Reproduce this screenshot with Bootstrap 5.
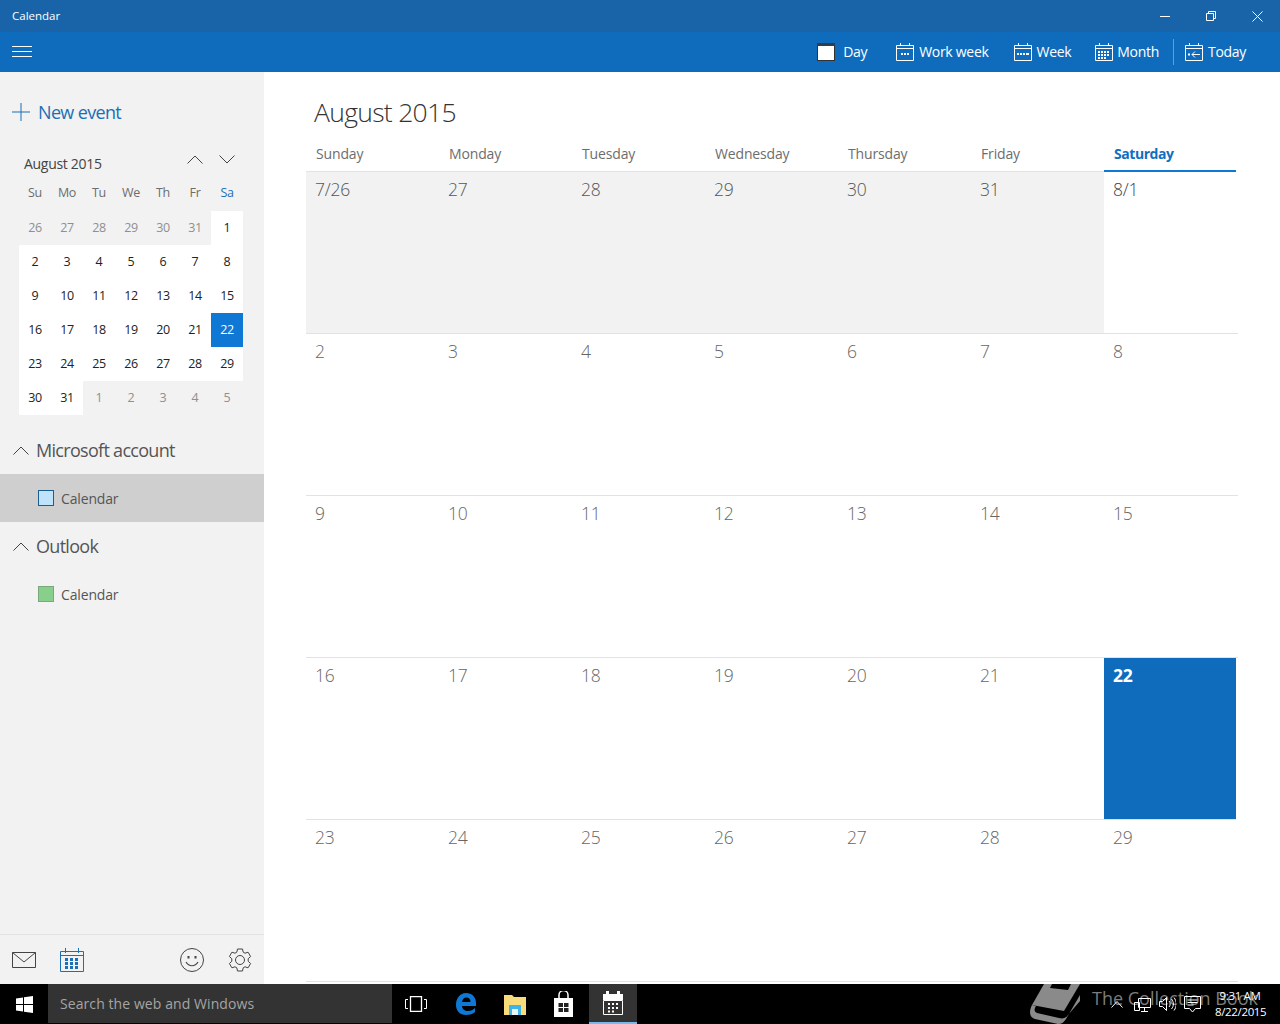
<!DOCTYPE html>
<html lang="en">
<head>
<meta charset="utf-8">
<title>Calendar</title>
<link href="https://cdn.jsdelivr.net/npm/bootstrap@5.3.0/dist/css/bootstrap.min.css" rel="stylesheet">
<style>
html,body{height:1024px;overflow:hidden;}
body{font-family:"Open Sans","Noto Sans",sans-serif;color:#444;background:#fff;}
.app-shell{width:1280px;height:1024px;display:flex;flex-direction:column;}
.title-strip{height:32px;background:#1964a8;color:#fff;font-size:11.5px;padding-left:12px;flex:none;}
.win-btns{width:138px;margin-left:auto;}
.win-btns span{width:46px;display:flex;justify-content:center;}
.tool-strip{height:40px;background:#0f6cbd;color:#fff;font-size:14px;flex:none;padding-right:34px;padding-bottom:1px;}
.ham{margin-left:12px;margin-right:auto;display:block;}
.tool-item{display:flex;align-items:center;gap:5px;margin-left:23px;letter-spacing:-.3px;}
.tool-item.first-item{gap:8px;}
.tool-item.wk-item{margin-left:29px;}
.tool-item.wkk-item{margin-left:25px;}
.tool-item.mon-item{margin-left:24px;gap:4px;}
.tool-sep{width:1px;height:26px;background:#5d9fd6;margin-left:14px;margin-right:-12px;}
.body-area{flex:1;display:flex;min-height:0;}
.side-col{width:264px;background:#f2f2f2;display:flex;flex-direction:column;flex:none;}
.new-evt{height:28px;margin-top:26px;padding-left:12px;color:#1a6fb5;font-size:18px;gap:8px;letter-spacing:-.65px;}
.mini-head{margin-top:24px;height:26px;padding-left:24px;position:relative;font-size:14px;color:#444;letter-spacing:-.3px;}
.mini-arrows{margin-left:auto;width:80px;padding-left:3px;display:flex;gap:16px;margin-top:-7px;padding-right:0;}
.mini-grid{display:grid;grid-template-columns:repeat(7,32px);grid-auto-rows:34px;margin-left:19px;font-size:12.5px;text-align:center;}
.mini-dow{height:36px;display:grid;grid-template-columns:repeat(7,32px);margin-left:19px;margin-top:-1px;font-size:12.5px;color:#6d6d6d;text-align:center;align-items:center;letter-spacing:-.3px;}
.mini-dow .sat-lbl{color:#1a6fb5;}
.mini-grid div{display:flex;align-items:center;justify-content:center;background:#fff;color:#222;letter-spacing:-.3px;}
.mini-grid div.off{background:transparent;color:#8f8f8f;}
.mini-grid div.now{background:#0f78d4;color:#fff;}
.acct-head{height:48px;font-size:18px;color:#555;letter-spacing:-.7px;padding-left:13px;gap:7px;}
.acct-first{margin-top:11px;}
.cal-row{height:48px;padding-left:38px;gap:7px;font-size:14px;color:#555;letter-spacing:-.15px;}
.cal-row.picked{background:#cfcfcf;}
.swatch{width:16px;height:16px;display:block;flex:none;}
.sw-blue{background:#bfe3fa;border:1px solid #1b5e94;}
.sw-green{background:#88cf8c;border:1px solid #7aa87c;}
.side-foot{margin-top:auto;height:50px;border-top:1px solid #e2e2e2;position:relative;padding:0 12px;}
.main-col{flex:1;padding:0 42px 0 42px;min-width:0;}
.main-title{font-size:26.5px;font-weight:300;color:#333;height:68px;margin:0;padding:21px 0 0 8px;line-height:38px;letter-spacing:-.7px;}
.week-head{display:grid;grid-template-columns:repeat(6,133px) 134px;height:32px;font-size:14px;color:#6d6d6d;letter-spacing:-.15px;}
.week-head div{padding:4px 0 0 10px;line-height:20px;border-bottom:1px solid #e2e2e2;}
.week-head div.sat-col{color:#0f6fc0;font-weight:700;border-bottom:2px solid #0f78d4;margin-right:2px;letter-spacing:-.45px;}
.month-grid{display:grid;grid-template-columns:repeat(6,133px) 134px;grid-auto-rows:162px;}
.month-grid div{padding:5px 0 0 9px;font-size:17.5px;line-height:24px;font-weight:300;color:#666;border-bottom:1px solid #e2e2e2;letter-spacing:-.2px;}
.month-grid div.prev{background:#f2f2f2;color:#555;}
.month-grid div.sat-first{color:#444;}
.month-grid div.today{background:#0f6cbd;background-clip:padding-box;color:#fff;font-weight:700;margin-right:2px;}
.task-strip{height:40px;background:#000;flex:none;position:relative;color:#fff;}
.start-btn{width:48px;display:flex;justify-content:center;}
.search-box{width:344px;height:39px;background:#333;color:#a5a5a5;font-size:14px;padding-left:12px;align-self:flex-start;letter-spacing:.08px;}
.tb-slot{width:48px;height:40px;display:flex;align-items:center;justify-content:center;}
.tb-slot.live{background:#333;border-bottom:2px solid #76b9ed;}
.slot-two{margin-left:2px;}
.slot-one{margin-left:1px;}
.tray{margin-left:auto;padding-right:15px;}
.net-ico{margin-left:11px;}
.clock{width:50px;text-align:center;font-size:11.5px;line-height:16px;margin-left:14px;letter-spacing:-.35px;white-space:nowrap;}
.wm-mark{position:absolute;left:1030px;top:0;height:40px;display:flex;align-items:flex-start;color:#7c7c7c;font-size:18px;gap:12px;white-space:nowrap;}
.wm-mark span{line-height:28px;}
.tray-layer{position:relative;z-index:1;}
svg{display:block;flex:none;}
</style>
</head>
<body>
<div class="app-shell">
  <div class="title-strip d-flex align-items-center">
    <span>Calendar</span>
    <div class="win-btns d-flex align-items-center">
      <span><svg width="10" height="10"><path d="M0 5.500H10" stroke="#fff"/></svg></span>
      <span><svg width="10" height="10" fill="none" stroke="#fff"><path d="M.5 2.500h7v7h-7zM2.500 2.500v-2h7v7h-2"/></svg></span>
      <span><svg width="11" height="11" fill="none" stroke="#fff"><path d="M.5.500l10 10M10.500.500l-10 10"/></svg></span>
    </div>
  </div>
  <div class="tool-strip d-flex align-items-center">
    <svg class="ham" width="20" height="12" stroke="#fff"><path d="M0 .500H20M0 5.500H20M0 10.500H20"/></svg>
    <div class="tool-item first-item">
      <svg width="18" height="18" stroke="#333" fill="#fff"><rect x=".5" y="1.500" width="17" height="16" fill="#fff"/><path d="M0 1.500H18" stroke-width="3" stroke="#2d3e50"/></svg>Day</div>
    <div class="tool-item wk-item">
      <svg width="18" height="18" fill="none" stroke="#fff"><path d="M.5 2.500h17v15H.5zM.5 5.500h17M4.500 0v3M13.500 0v3"/><path d="M5 11h2M8 11h2M11 11h2" stroke-width="2"/></svg>Work week</div>
    <div class="tool-item wkk-item">
      <svg width="18" height="18" fill="none" stroke="#fff"><path d="M.5 2.500h17v15H.5zM.5 5.500h17M4.500 0v3M13.500 0v3"/><path d="M3 11h2M6 11h2M9 11h2M12 11h3" stroke-width="2"/></svg>Week</div>
    <div class="tool-item mon-item">
      <svg width="18" height="18" fill="none" stroke="#fff"><path d="M.5 2.500h17v15H.5zM.5 5.500h17M4.500 0v3M13.500 0v3"/><path d="M3 9h12M3 12h12M3 15h9" stroke-width="2" stroke-dasharray="2 1"/></svg>Month</div>
    <div class="tool-sep"></div>
    <div class="tool-item">
      <svg width="18" height="18" fill="none" stroke="#fff"><path d="M.5 2.500h17v15H.5zM.5 5.500h17M4.500 0v3M13.500 0v3M15 11.500H7M10 8.500l-3 3 3 3"/><path d="M3 11.500h2" stroke-width="2"/></svg>Today</div>
  </div>
  <div class="body-area">
    <aside class="side-col">
      <div class="new-evt d-flex align-items-center">
        <svg width="18" height="18" stroke="#1a6fb5"><path d="M9 0V18M0 9H18"/></svg>New event</div>
      <div class="mini-head d-flex align-items-center">
        <span>August 2015</span>
        <div class="mini-arrows">
          <svg width="16" height="9" fill="none" stroke="#444"><path d="M.5 8.500L8 1l7.500 7.500"/></svg>
          <svg width="16" height="9" fill="none" stroke="#444"><path d="M.5.500L8 8l7.500-7.500"/></svg>
        </div>
      </div>
      <div class="mini-dow"><span>Su</span><span>Mo</span><span>Tu</span><span>We</span><span>Th</span><span>Fr</span><span class="sat-lbl">Sa</span></div>
      <div class="mini-grid">
        <div class="off">26</div><div class="off">27</div><div class="off">28</div><div class="off">29</div><div class="off">30</div><div class="off">31</div><div>1</div>
        <div>2</div><div>3</div><div>4</div><div>5</div><div>6</div><div>7</div><div>8</div>
        <div>9</div><div>10</div><div>11</div><div>12</div><div>13</div><div>14</div><div>15</div>
        <div>16</div><div>17</div><div>18</div><div>19</div><div>20</div><div>21</div><div class="now">22</div>
        <div>23</div><div>24</div><div>25</div><div>26</div><div>27</div><div>28</div><div>29</div>
        <div>30</div><div>31</div><div class="off">1</div><div class="off">2</div><div class="off">3</div><div class="off">4</div><div class="off">5</div>
      </div>
      <div class="acct-head acct-first d-flex align-items-center">
        <svg width="16" height="9" fill="none" stroke="#444"><path d="M.5 8.500L8 1l7.500 7.500"/></svg>Microsoft account</div>
      <div class="cal-row picked d-flex align-items-center"><span class="swatch sw-blue"></span>Calendar</div>
      <div class="acct-head d-flex align-items-center">
        <svg width="16" height="9" fill="none" stroke="#444"><path d="M.5 8.500L8 1l7.500 7.500"/></svg>Outlook</div>
      <div class="cal-row d-flex align-items-center"><span class="swatch sw-green"></span>Calendar</div>
      <div class="side-foot d-flex align-items-center">
        <svg width="24" height="16" fill="none" stroke="#444"><path d="M.5.500h23v15H.5zM.5.500L12 10 23.500.500"/></svg>
        <svg class="ms-4" width="24" height="24" fill="none" stroke="#1a6fb5"><path d="M.5 3.500h23v20H.5zM.5 7.500h23M5.500 0v5M18.500 0v5"/><path d="M5 11.500h14M5 15.500h14M5 19.500h14" stroke-width="3" stroke-dasharray="3 2"/></svg>
        <svg class="ms-auto" width="24" height="24" fill="none" stroke="#444"><circle cx="12" cy="12" r="11.500"/><path d="M6 14c3 5 9 5 12 0" stroke-width="1.200"/><path d="M8.500 8v2.500M15.500 8v2.500" stroke-width="2"/></svg>
        <svg class="ms-4" width="24" height="24" fill="none" stroke="#444"><circle cx="12" cy="12" r="4.500"/><path d="M9.500 1h5l.7 3.200 1.800 1 3.100-1 2.500 4.300-2.400 2.200v2.600l2.400 2.200-2.500 4.300-3.100-1-1.800 1-.7 3.200h-5l-.7-3.200-1.800-1-3.100 1L1.400 15.500l2.400-2.200v-2.600L1.400 8.500 3.900 4.200l3.100 1 1.800-1z"/></svg>
      </div>
    </aside>
    <main class="main-col">
      <h1 class="main-title">August 2015</h1>
      <div class="week-head"><div>Sunday</div><div>Monday</div><div>Tuesday</div><div>Wednesday</div><div>Thursday</div><div>Friday</div><div class="sat-col">Saturday</div></div>
      <div class="month-grid">
        <div class="prev">7/26</div><div class="prev">27</div><div class="prev">28</div><div class="prev">29</div><div class="prev">30</div><div class="prev">31</div><div class="sat-first">8/1</div>
        <div>2</div><div>3</div><div>4</div><div>5</div><div>6</div><div>7</div><div>8</div>
        <div>9</div><div>10</div><div>11</div><div>12</div><div>13</div><div>14</div><div>15</div>
        <div>16</div><div>17</div><div>18</div><div>19</div><div>20</div><div>21</div><div class="today">22</div>
        <div>23</div><div>24</div><div>25</div><div>26</div><div>27</div><div>28</div><div>29</div>
      </div>
    </main>
  </div>
  <div class="task-strip d-flex align-items-center">
    <div class="start-btn"><svg width="17" height="17" fill="#fff"><path d="M0 2.500L7 1.500V8H0zM8 1.300L17 0V8H8zM0 9h7v6.500L0 14.500zM8 9h9v8L8 15.700z"/></svg></div>
    <div class="search-box d-flex align-items-center">Search the web and Windows</div>
    <div class="tb-slot"><svg width="22" height="16" fill="none" stroke="#fff"><path d="M5.500.500h11v15h-11z" stroke-width="1.300"/><path d="M3 3.500H.5v9H3M19 3.500h2.500v9H19"/></svg></div>
    <div class="tb-slot slot-two"><svg width="20" height="22"><path d="M10 0C4 0 0 5 0 12c0 6 4 10 10 10 4 0 7-1 9-3v-4c-2 2-4 3-7 3-3 0-6-2-6-5h14v-3C20 4 16 0 10 0zM6 9c.5-3 2-4.500 4.500-4.500S14.500 6 14.500 9z" fill="#0f78d4"/></svg></div>
    <div class="tb-slot slot-one"><svg width="22" height="21"><path d="M0 1h8l2 2h12v18H0z" fill="#f8dc7c"/><path d="M5 11h12v10H5z" fill="#3fb4e6"/><path d="M8 15h6v6H8z" fill="#e9f4f8"/></svg></div>
    <div class="tb-slot"><svg width="21" height="26"><path d="M1 7h19v19H1z" fill="#fff"/><path d="M6 8V4a4.500 4.500 0 0 1 9 0v4" fill="none" stroke="#fff" stroke-width="1.500"/><path d="M5.500 12h4.500v4H5.500zM11 12h4.500v4H11zM5.500 17h4.500v4H5.500zM11 17h4.500v4H11z" fill="#222"/></svg></div>
    <div class="tb-slot live slot-two"><svg width="20" height="24"><path d="M0 3h3V0h3v3h8V0h3v3h3v6H0z" fill="#fff"/><path d="M.5 9.500h19v14H.5z" fill="#333" stroke="#fff"/><path d="M5 12h2v2H5zM9 12h2v2H9zM13 12h2v2h-2zM5 16h2v2H5zM9 16h2v2H9zM13 16h2v2h-2zM5 19.500h2v2H5zM9 19.500h2v2H9z" fill="#fff"/></svg></div>
    <div class="wm-mark">
      <svg width="50" height="40"><path d="M14 0H50L34 27 2 21z" fill="#8a8a8a"/><path d="M22 0h19l-3 6-18-2z" fill="#000"/><path d="M2 21C-1 27-1 33 5 35l23 5c4 0 6-2 8-5L50 11v6L38 31c-2 3-5 4-9 3L7 29c-3-1-3-4-1-7z" fill="#8a8a8a"/></svg>
      <span>The Collection Book</span>
    </div>
    <div class="tray tray-layer d-flex align-items-center">
      <svg width="12" height="7" fill="none" stroke="#fff"><path d="M.5 6.500l5.500-6 5.500 6"/></svg>
      <svg class="net-ico" width="17" height="17" fill="none" stroke="#fff"><path d="M4.500 2.500h12v9h-12zM.5 6.500h5v8h-5zM10.500 11.500v4M7 15.500h7"/></svg>
      <svg class="ms-2" width="17" height="16" fill="none" stroke="#fff"><path d="M.5 5.500h3l4-4v13l-4-4h-3zM10 5c1.500 1.500 1.500 4.500 0 6M12.500 3c2.500 3 2.500 7 0 10M15 1.500c3 4 3 9 0 13"/></svg>
      <svg class="ms-2" width="17" height="17" fill="none" stroke="#fff"><path d="M.5.500h16v12h-5l-3 3.500-3-3.500h-5zM3.500 4h10M3.500 6.500h10M3.500 9h6"/></svg>
      <div class="clock">9:31 AM<br>8/22/2015</div>
    </div>
  </div>
</div>
<script src="https://cdn.jsdelivr.net/npm/bootstrap@5.3.0/dist/js/bootstrap.bundle.min.js"></script>
</body>
</html>
